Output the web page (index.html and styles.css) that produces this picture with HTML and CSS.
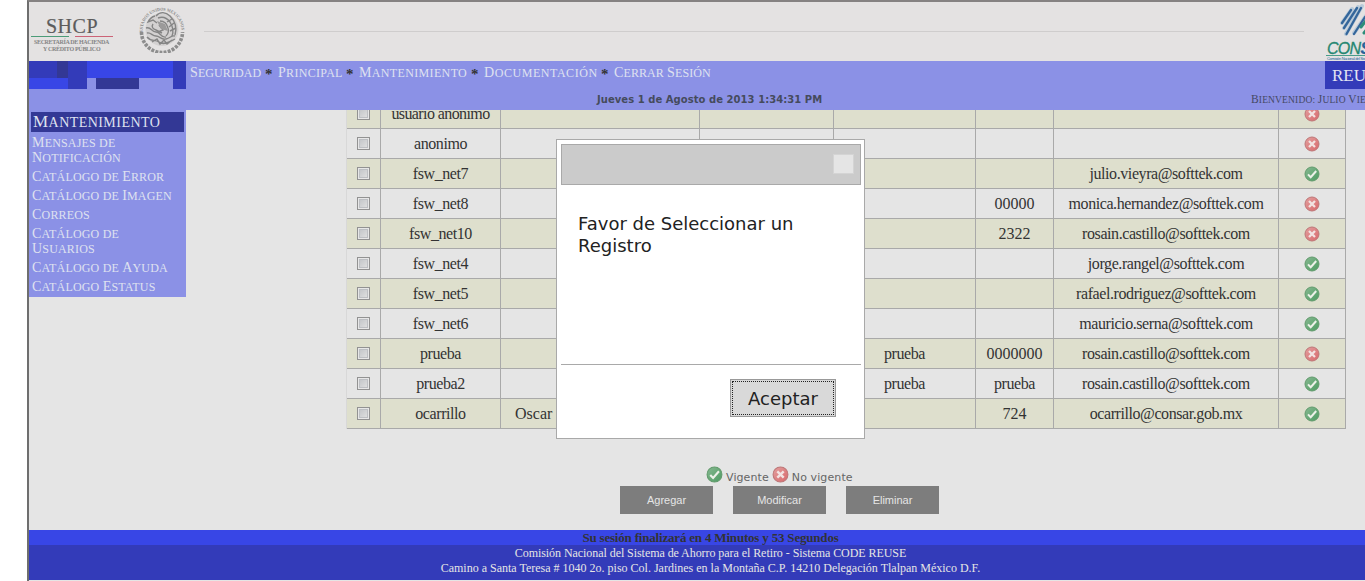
FILE: index.html
```
<!DOCTYPE html>
<html lang="es">
<head>
<meta charset="utf-8">
<title>Sistema CODE REUSE</title>
<link rel="stylesheet" href="styles.css">
</head>
<body>
<svg class="defs" width="0" height="0">
  <defs>
    <linearGradient id="gr" x1="0" y1="0" x2="1" y2="1"><stop offset="0" stop-color="#87b891"/><stop offset="1" stop-color="#4d9c62"/></linearGradient>
    <linearGradient id="rd" x1="0" y1="0" x2="1" y2="1"><stop offset="0" stop-color="#e2a09f"/><stop offset="1" stop-color="#d9686b"/></linearGradient>
    <symbol id="ok" viewBox="0 0 16 16"><circle cx="8" cy="8" r="7" fill="url(#gr)" stroke="#629b6d"/><path d="M4 8.4l2.7 2.8L12.2 5" fill="none" stroke="#edf1e9" stroke-width="2"/></symbol>
    <symbol id="no" viewBox="0 0 16 16"><circle cx="8" cy="8" r="7" fill="url(#rd)" stroke="#bd7778"/><path d="M5 5l6 6M11 5l-6 6" fill="none" stroke="#f2e3e2" stroke-width="2.3"/></symbol>
  </defs>
</svg>
<div class="page">
  <header class="header">
    <div class="shcp">
      <div class="shcp-name">SHCP</div>
      <div class="shcp-line"><i class="green"></i><i class="red"></i></div>
      <div class="shcp-sub s1">SECRETARÍA DE HACIENDA</div>
      <div class="shcp-sub s2">Y CRÉDITO PÚBLICO</div>
    </div>
    <div class="divider"></div>
    <svg class="seal" width="46" height="48" viewBox="0 0 46 48">
      <defs><path id="arc" d="M3.800 27A19.300 19.300 0 1 1 42.200 27"/></defs>
      <circle cx="23" cy="24.500" r="16.500" fill="#d3d1d1"/>
      <text class="seal-text"><textPath href="#arc" textLength="62" lengthAdjust="spacingAndGlyphs">ESTADOS UNIDOS MEXICANOS</textPath></text>
      <path d="M2.500 27A20.500 20.500 0 0 0 43.500 27" fill="none" stroke="#8d8d8d" stroke-width="3.600" stroke-dasharray="3 1.200"/>
      <g transform="translate(0 1)" fill="none" stroke="#858585" stroke-width="1.400">
        <path d="M17 10c4-5 10-4 14 0 5 5 7 12 5 19M19 12c5-2 9 0 12 4 3 5 4 9 2 14M21 15c4 0 7 3 8 7 1 3 0 6-2 8M16 10c-4 1-6 4-7 6l5-2 4 3"/>
        <path d="M14 18c-2 3 0 5 3 6l6 3M7 22c5-2 5 4 10 4s4 6 10 5M8 27c4-1 5 3 9 3s5 4 10 3 5-4 9-3M8 31c4 5 8 2 12 5s9 1 16-3M13 36l5-3 3 5 4-4 3 4 5-4M20 19l4 5-5 2M35 17l-5 4M37 22l-6 3M33 13l-5 3"/>
      </g>
      <path d="M18 16l8 3 3 7-7-2z" fill="#9b9a9a"/>
    </svg>
    <div class="rule"></div>
    <div class="consar">
      <svg width="55" height="36" viewBox="0 0 55 36">
        <g stroke-linecap="round">
          <path d="M16 20L26 6M18 25L32 4M20 31L36 3M28 30L40 13" stroke="#b9cad9" stroke-width="4"/>
          <path d="M16 20L25 7M18 25L31 5M20.500 31L35 5M28 31L39 14" stroke="#34669b" stroke-width="2.300"/>
          <path d="M35 24L46 10M38 30L50 15" stroke="#2b8d79" stroke-width="3"/>
        </g>
      </svg>
      <div class="consar-name"><span>CON</span><b>SAR</b></div>
      <div class="consar-sub">Comisión Nacional del Sistema de Ahorro para el Retiro</div>
    </div>
  </header>
  <div class="bar">
    <div class="blocks"><i class="b1"></i><i class="b2"></i><i class="b3"></i><i class="b4"></i><i class="b5"></i><i class="b6"></i><i class="b7"></i></div>
    <div class="bar-main">
      <nav class="menu"><a class="m1"><i>S</i>eguridad</a><b>*</b><a class="m2"><i>P</i>rincipal</a><b>*</b><a class="m3"><i>M</i>antenimiento</a><b>*</b><a class="m4"><i>D</i>ocumentación</a><b>*</b><a class="m5"><i>C</i>errar <i>S</i>esión</a></nav>
      <div class="date">Jueves 1 de Agosto de 2013 1:34:31 PM</div>
    </div>
    <div class="bar-right">
      <div class="reuse">REUSE</div>
      <div class="welcome"><i>B</i>ienvenido: <i>J</i>ulio <i>V</i>ieyra</div>
    </div>
  </div>
  <div class="body">
    <aside class="side">
      <h2><i>M</i>antenimiento</h2>
      <a><i>M</i>ensajes de<br><i>N</i>otificación</a>
      <a><i>C</i>atálogo de <i>E</i>rror</a>
      <a><i>C</i>atálogo de <i>I</i>magen</a>
      <a><i>C</i>orreos</a>
      <a><i>C</i>atálogo de<br><i>U</i>suarios</a>
      <a><i>C</i>atálogo de <i>A</i>yuda</a>
      <a><i>C</i>atálogo <i>E</i>status</a>
    </aside>
    <main class="main">
      <div class="grid">
        <div class="row odd"><span><i class="cb"></i></span><span class="tight">usuario anonimo</span><span></span><span></span><span></span><span></span><span></span><span><svg><use href="#no"/></svg></span></div>
        <div class="row"><span><i class="cb"></i></span><span>anonimo</span><span></span><span></span><span></span><span></span><span></span><span><svg><use href="#no"/></svg></span></div>
        <div class="row odd"><span><i class="cb"></i></span><span>fsw_net7</span><span></span><span></span><span></span><span></span><span>julio.vieyra@softtek.com</span><span><svg><use href="#ok"/></svg></span></div>
        <div class="row"><span><i class="cb"></i></span><span>fsw_net8</span><span></span><span></span><span></span><span class="num">00000</span><span>monica.hernandez@softtek.com</span><span><svg><use href="#no"/></svg></span></div>
        <div class="row odd"><span><i class="cb"></i></span><span>fsw_net10</span><span></span><span></span><span></span><span class="num">2322</span><span>rosain.castillo@softtek.com</span><span><svg><use href="#no"/></svg></span></div>
        <div class="row"><span><i class="cb"></i></span><span>fsw_net4</span><span></span><span></span><span></span><span></span><span>jorge.rangel@softtek.com</span><span><svg><use href="#ok"/></svg></span></div>
        <div class="row odd"><span><i class="cb"></i></span><span>fsw_net5</span><span></span><span></span><span></span><span></span><span>rafael.rodriguez@softtek.com</span><span><svg><use href="#ok"/></svg></span></div>
        <div class="row"><span><i class="cb"></i></span><span>fsw_net6</span><span></span><span></span><span></span><span></span><span>mauricio.serna@softtek.com</span><span><svg><use href="#ok"/></svg></span></div>
        <div class="row odd"><span><i class="cb"></i></span><span>prueba</span><span></span><span></span><span>prueba</span><span class="num">0000000</span><span>rosain.castillo@softtek.com</span><span><svg><use href="#no"/></svg></span></div>
        <div class="row"><span><i class="cb"></i></span><span>prueba2</span><span></span><span></span><span>prueba</span><span>prueba</span><span>rosain.castillo@softtek.com</span><span><svg><use href="#ok"/></svg></span></div>
        <div class="row odd"><span><i class="cb"></i></span><span>ocarrillo</span><span class="left">Oscar</span><span></span><span></span><span class="num">724</span><span>ocarrillo@consar.gob.mx</span><span><svg><use href="#ok"/></svg></span></div>
      </div>
      <div class="legend"><svg><use href="#ok"/></svg><span>Vigente</span><svg><use href="#no"/></svg><span>No vigente</span></div>
      <div class="actions"><button>Agregar</button><button>Modificar</button><button>Eliminar</button></div>
    </main>
  </div>
  <footer class="footer">
    <div class="session">Su sesión finalizará en 4 Minutos y 53 Segundos</div>
    <div class="address"><p class="f1">Comisión Nacional del Sistema de Ahorro para el Retiro - Sistema CODE REUSE</p><p class="f2">Camino a Santa Teresa # 1040 2o. piso Col. Jardines en la Montaña C.P. 14210 Delegación Tlalpan México D.F.</p></div>
  </footer>
</div>
<div class="dialog">
  <div class="dialog-title"><i></i></div>
  <div class="dialog-text">Favor de Seleccionar un Registro</div>
  <div class="dialog-foot"><button><span>Aceptar</span></button></div>
</div>
</body>
</html>
```
FILE: styles.css
```
* { box-sizing: border-box; }
body { margin: 0; background: #fff; width: 1365px; height: 581px; overflow: hidden; font-family: "Liberation Serif", serif; color: #333; }
.defs { position: absolute; }
.page { margin-left: 27px; width: 1338px; height: 581px; border-left: 2px solid #6e6e6e; border-top: 2px solid #858282; background: #e5e5e5; overflow: hidden; display: flex; flex-direction: column; }
.header { height: 59px; flex: none; background: #e4e2e2; display: flex; }
.shcp { width: 86px; padding: 14px 0 0 2px; flex: none; color: #5c5c5c; }
.shcp-name { font-size: 20px; line-height: 20px; padding-left: 15px; letter-spacing: 0.5px; white-space: nowrap; -webkit-text-stroke: 0.2px #5c5c5c; }
.shcp-line { display: flex; gap: 6px; height: 1px; }
.shcp-line i { width: 38px; background: #4c9c78; }
.shcp-line .red { background: #cc6377; }
.shcp-sub { font-size: 6px; line-height: 7px; font-weight: bold; white-space: nowrap; color: #858585; }
.s1 { padding: 2px 0 0 3px; letter-spacing: -0.35px; }
.s2 { padding-left: 12px; letter-spacing: -0.3px; }
.divider { width: 1px; height: 34px; margin: 11px 0 0 13px; background: linear-gradient(#e4e2e2, #b3b1b1 50%, #e4e2e2); }
.seal { margin: 3px 0 0 11px; flex: none; }
.seal-text { font-size: 4.5px; font-weight: bold; fill: #888; }
.rule { width: 1100px; height: 1px; background: #cfcdcd; margin: 29px 0 0 19px; flex: none; }
.consar { width: 80px; flex: none; margin-left: 22px; padding-top: 1px; }
.consar svg { display: block; }
.consar-name { font: italic 16px/19px "Liberation Sans", sans-serif; height: 17px; padding-left: 1px; color: #268771; letter-spacing: -0.7px; border-bottom: 1px solid #4a9c8a; white-space: nowrap; -webkit-text-stroke: 0.3px; }
.consar-name b { color: #28629b; font-weight: 900; }
.consar-sub { font: 4px/5px "Liberation Sans", sans-serif; color: #28629b; white-space: nowrap; letter-spacing: -0.35px; padding-left: 1px; }
.bar { height: 49px; flex: none; background: #8b91e6; display: flex; }
.blocks { width: 157px; height: 28px; flex: none; display: grid; grid-template-columns: 28px 11px 19px 9px 43px 34px 13px; grid-template-rows: 17px 11px; }
.b1 { grid-area: 1 / 1; background: #333bb9; }
.b2 { grid-area: 1 / 2; background: #333895; }
.b3 { grid-area: 2 / 1 / 3 / 3; background: #3846e6; }
.b4 { grid-area: 1 / 3 / 3 / 4; background: #333bb9; }
.b5 { grid-area: 1 / 4 / 2 / 7; background: #3846e6; }
.b6 { grid-area: 2 / 5; background: #333895; }
.b7 { grid-area: 1 / 7 / 3 / 8; background: #333bb9; }
.bar-main { width: 1036px; flex: none; padding-left: 4px; }
.menu { height: 24px; font-size: 12px; line-height: 24px; text-transform: uppercase; display: flex; white-space: nowrap; color: #dfe1f0; }
.menu i, .side i, .welcome i { font-style: normal; font-size: 14px; line-height: 1px; }
.menu a { letter-spacing: 0.1px; }
.menu .m1 { width: 75px; } .menu .m2 { width: 68px; letter-spacing: 0.3px; } .menu .m3 { width: 112px; letter-spacing: 0.35px; } .menu .m4 { width: 117px; letter-spacing: 0.55px; }
.menu b { color: #333; width: 13px; font-size: 15px; line-height: 26px; }
.date { font: bold 10px/16px "DejaVu Sans", sans-serif; padding: 7px 0 0 407px; color: #454b5d; white-space: nowrap; letter-spacing: 0.05px; }
.bar-right { width: 150px; flex: none; }
.reuse { margin-left: 103px; height: 28px; background: #333bb9; color: #e2e3f2; font-size: 17px; line-height: 29px; padding-left: 7px; white-space: nowrap; }
.welcome { font-size: 9.5px; line-height: 16px; padding: 3px 0 0 29px; letter-spacing: 0.15px; text-transform: uppercase; white-space: nowrap; color: #454864; }
.welcome i { font-size: 11.5px; }
.body { height: 420px; flex: none; display: flex; align-items: flex-start; }
.side { width: 157px; height: 187px; flex: none; background: #8b91e6; padding: 2px 2px 0; text-transform: uppercase; color: #dfe1f0; }
.side h2 { margin: 0 0 4px; height: 20px; background: #333895; font-size: 14px; line-height: 21px; font-weight: normal; padding-left: 2px; letter-spacing: 0.45px; }
.side h2 i { font-size: 17px; }
.side a { display: block; font-size: 12px; line-height: 15px; padding-left: 1px; margin-bottom: 4px; letter-spacing: 0.18px; white-space: nowrap; }
.main { width: 1160px; height: 420px; padding-left: 160px; overflow: hidden; }
.grid { width: 1000px; margin-top: -11px; border-left: 1px solid #d8d8d8; }
.row { display: grid; grid-template-columns: 34px 120px 199px 134px 142px 78px 225px 67px; height: 30px; border-bottom: 1px solid #a9a9a9; }
.row.odd { background: #dedfcd; }
.row span { border-right: 1px solid #a9a9a9; display: flex; align-items: center; justify-content: center; font-size: 16px; line-height: 18px; padding-top: 1px; letter-spacing: -0.42px; white-space: nowrap; }
.row .tight { letter-spacing: -0.6px; }
.row .num { letter-spacing: 0; }
.row .left { justify-content: flex-start; padding-left: 14px; letter-spacing: 0; }
.row svg { width: 16px; height: 16px; margin-top: -1px; }
.cb { width: 13px; height: 13px; border: 1px solid #929292; background: linear-gradient(135deg, #bdc0c4, #e5e5e5); box-shadow: inset 0 0 0 1px #e7e7e7, inset 0 0 0 2px #bdbfc3; margin-top: -2px; }
.legend { display: flex; margin: 37px 0 0 360px; height: 20px; font: 11px/24px "DejaVu Sans", sans-serif; letter-spacing: 0.1px; color: #666; white-space: nowrap; }
.legend svg { width: 17px; height: 17px; margin-right: 3px; }
.legend span { margin-right: 3px; }
.actions { display: flex; gap: 20px; margin-left: 274px; }
.actions button { width: 93px; height: 28px; border: 0; padding: 0; background: #7d7d7d; color: #e5e5e5; font: 11px "Liberation Sans", sans-serif; }
.footer { width: 1363px; height: 50px; flex: none; text-align: center; }
.session { height: 15px; background: #3846e6; color: #333; font-size: 13px; line-height: 16px; font-weight: bold; letter-spacing: -0.19px; }
.address { height: 35px; background: #333bb9; color: #e5e5e5; font-size: 12px; line-height: 15px; padding-top: 1px; }
.address p { margin: 0; }
.f1 { letter-spacing: -0.06px; }
.dialog { position: absolute; left: 556px; top: 139px; width: 309px; height: 300px; background: #fff; border: 1px solid #a9a9a9; padding: 4px 3px 0 4px; font-family: "DejaVu Sans", sans-serif; color: #222; }
.dialog-title { width: 300px; height: 41px; background: #cbcbcb; border: 1px solid #a9a9a9; display: flex; justify-content: flex-end; padding: 9px 6px; }
.dialog-title i { width: 21px; height: 20px; background: #e5e5e5; border: 1px solid #d4d4d4; }
.dialog-text { height: 179px; padding: 28px 50px 0 17px; font-size: 18px; line-height: 22px; }
.dialog-foot { width: 300px; border-top: 1px solid #a9a9a9; display: flex; padding: 14px 0 0 169px; }
.dialog-foot button { width: 106px; height: 38px; background: #d9d9d9; border: 1px solid #999; padding: 1px; font: 18px "DejaVu Sans", sans-serif; color: #222; }
.dialog-foot span { display: block; height: 34px; line-height: 34px; border: 1px dotted #222; }
```
